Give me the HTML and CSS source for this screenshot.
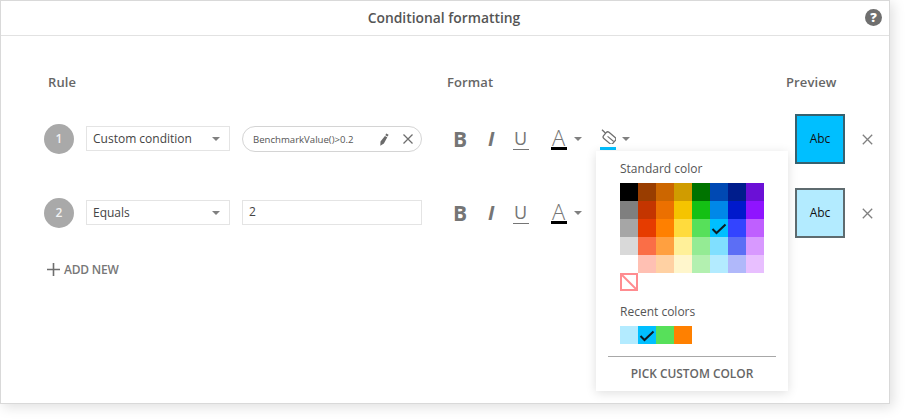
FILE: index.html
```html
<!DOCTYPE html>
<html lang="en">
<head>
<meta charset="utf-8">
<title>Conditional formatting</title>
<link rel="stylesheet" href="styles.css">
</head>
<body>
<div class="dialog">
  <header class="title-bar">
    <h1 class="title">Conditional formatting</h1>
    <span class="help">?</span>
  </header>
  <main class="body">
    <div class="heads">
      <span class="head head-rule">Rule</span>
      <span class="head head-format">Format</span>
      <span class="head">Preview</span>
    </div>

    <div class="rule">
      <span class="num">1</span>
      <div class="select"><span>Custom condition</span><i class="caret"></i></div>
      <div class="formula">
        <span class="formula-text">BenchmarkValue()&gt;0.2</span>
        <svg class="pencil" width="10" height="13" viewBox="0 0 10 13"><path d="M7.2 0.4l2.4 1.3-0.9 1.8-2.4-1.3zM5.9 3l2.4 1.3-3.4 6.2-3.6 2.2 0.2-4.1z" fill="#6a6a6a"/></svg>
        <svg class="x-small" width="10" height="10" viewBox="0 0 10 10"><path d="M0.5 0.5l9 9M9.5 0.5l-9 9" stroke="#6e6e6e" stroke-width="1.3" fill="none"/></svg>
      </div>
      <div class="format">
        <span class="fmt-b">B</span>
        <span class="fmt-i">I</span>
        <span class="fmt-u">U</span>
        <span class="fmt-a">A<i class="bar bar-black"></i></span>
        <i class="caret fmt-caret"></i>
        <span class="fmt-fill">
          <svg width="16" height="15" viewBox="0 0 16 15"><g transform="rotate(40 9.5 9)"><rect x="3.5" y="5" width="12" height="8" rx="2" fill="none" stroke="#6e6e6e" stroke-width="1.3"/><path d="M7 9h8" fill="none" stroke="#6e6e6e" stroke-width="1.1"/></g><path d="M2 0.8l3.6 3.4" fill="none" stroke="#6e6e6e" stroke-width="1.3"/></svg>
          <i class="bar bar-blue"></i>
        </span>
        <i class="caret fmt-caret2"></i>
      </div>
      <div class="preview preview-blue">Abc</div>
      <svg class="x-row" width="11" height="11" viewBox="0 0 11 11"><path d="M0.8 0.8l9.4 9.4M10.2 0.8l-9.4 9.4" stroke="#808080" stroke-width="1.3" fill="none"/></svg>
    </div>

    <div class="rule">
      <span class="num">2</span>
      <div class="select"><span>Equals</span><i class="caret"></i></div>
      <div class="value">2</div>
      <div class="format">
        <span class="fmt-b">B</span>
        <span class="fmt-i">I</span>
        <span class="fmt-u">U</span>
        <span class="fmt-a">A<i class="bar bar-black"></i></span>
        <i class="caret fmt-caret"></i>
      </div>
      <div class="preview preview-light">Abc</div>
      <svg class="x-row" width="11" height="11" viewBox="0 0 11 11"><path d="M0.8 0.8l9.4 9.4M10.2 0.8l-9.4 9.4" stroke="#808080" stroke-width="1.3" fill="none"/></svg>
    </div>

    <div class="add-new">
      <svg width="13" height="13" viewBox="0 0 13 13"><path d="M6.5 0v13M0 6.5h13" stroke="#6e6e6e" stroke-width="1.6" fill="none"/></svg>
      <span>ADD NEW</span>
    </div>
  </main>

  <aside class="popup">
    <div class="popup-label">Standard color</div>
    <div class="palette">
      <i class="c000000"></i><i class="c993d00"></i><i class="ccc6600"></i><i class="cd09c00"></i><i class="c007300"></i><i class="c0049b3"></i><i class="c001d8c"></i><i class="c6b10d6"></i>
      <i class="c7f7f7f"></i><i class="cc43500"></i><i class="cec7000"></i><i class="cf5c400"></i><i class="c14c014"></i><i class="c0088e8"></i><i class="c0019cc"></i><i class="c8f14ff"></i>
      <i class="ca6a6a6"></i><i class="ce63c00"></i><i class="cff8000"></i><i class="cffdb3d"></i><i class="c57e05a"></i>
      <i class="c00bfff"><svg class="check" width="16" height="12" viewBox="0 0 16 12"><path d="M1.5 6l4 4 9-8.5" fill="none" stroke="#0c1a22" stroke-width="2"/></svg></i>
      <i class="c3344ff"></i><i class="cbf5fff"></i>
      <i class="cd9d9d9"></i><i class="cfa6e47"></i><i class="cffa040"></i><i class="cfff099"></i><i class="c94eb94"></i><i class="c80dfff"></i><i class="c5c6ef5"></i><i class="cd899ff"></i>
      <i class="cffffff"></i><i class="cffc0b3"></i><i class="cffd1a3"></i><i class="cfff6cc"></i><i class="cb3f0b0"></i><i class="cb3ebff"></i><i class="cb0b8fa"></i><i class="ce8bfff"></i>
      <i class="none"><svg width="18" height="18" viewBox="0 0 18 18"><rect x="1" y="1" width="16" height="16" fill="#fff" stroke="#ff8c90" stroke-width="2"/><path d="M1 1l16 16" stroke="#ff8c90" stroke-width="2"/></svg></i>
    </div>
    <div class="popup-label recent-label">Recent colors</div>
    <div class="palette">
      <i class="cb3ebff"></i>
      <i class="c00bfff"><svg class="check" width="16" height="12" viewBox="0 0 16 12"><path d="M1.5 6l4 4 9-8.5" fill="none" stroke="#0c1a22" stroke-width="2"/></svg></i>
      <i class="c57e05a"></i><i class="cff8000"></i>
    </div>
    <div class="pick">PICK CUSTOM COLOR</div>
  </aside>
</div>
</body>
</html>
```
FILE: styles.css
```css
* { box-sizing: border-box; }
html, body { margin: 0; height: 100%; background: #fff; overflow: hidden; }
body { font-family: "Open Sans", sans-serif; color: #555; }

.dialog {
  position: relative;
  width: 890px;
  height: 404px;
  border: 1px solid #d9d9d9;
  background: #fff;
  box-shadow: 3px 3px 12px rgba(0,0,0,.13);
}

.title-bar {
  position: relative;
  height: 35px;
  border-bottom: 1px solid #e2e2e2;
  display: flex;
  align-items: center;
  justify-content: center;
}
.title { margin: 0 2px 1px 0; font-size: 13.85px; font-weight: 600; color: #555; }
.help {
  position: absolute;
  right: 7px;
  top: 8px;
  width: 17px;
  height: 17px;
  border-radius: 50%;
  background: #6f6f6f;
  color: #fff;
  font-size: 13px;
  font-weight: 800;
  line-height: 17px;
  text-align: center;
}

.body { padding: 37px 0 0 43px; }
.heads { display: flex; height: 18px; align-items: center; margin-bottom: 23px; }
.head { font-size: 13px; font-weight: 600; color: #666; letter-spacing: .1px; }
.head-rule { width: 403px; padding-left: 4px; }
.head-format { width: 339px; }

.rule { display: flex; align-items: center; height: 50px; margin-bottom: 24px; }
.num {
  width: 30px;
  height: 30px;
  border-radius: 50%;
  background: #a9a9a9;
  color: #f2f2f2;
  font-size: 12px;
  font-weight: 600;
  line-height: 30px;
  text-align: center;
  flex: none;
  margin-right: 12px;
}
.select {
  width: 144px;
  height: 25px;
  margin: 0 12px 1px 0;
  border: 1px solid #e4e4e4;
  display: flex;
  align-items: center;
  justify-content: space-between;
  padding: 0 9px 0 6px;
  font-size: 12px;
  color: #444;
  flex: none;
}
.caret {
  display: block;
  width: 0;
  height: 0;
  border-style: solid;
  border-width: 4px 4px 0;
  border-color: #808080 transparent transparent;
  flex: none;
}
.formula {
  width: 180px;
  height: 26px;
  border: 1px solid #d4d4d4;
  border-radius: 13px;
  display: flex;
  align-items: center;
  padding: 0 8px 0 10px;
  flex: none;
}
.formula-text { font-size: 9.6px; color: #555; width: 127px; }
.pencil { margin-right: 14px; flex: none; }
.x-small { flex: none; }
.value {
  width: 180px;
  height: 25px;
  margin-bottom: 1px;
  border: 1px solid #e4e4e4;
  padding-left: 6px;
  font-size: 12px;
  line-height: 22px;
  color: #444;
  flex: none;
}

.format { width: 373px; height: 30px; display: flex; align-items: center; padding-left: 31px; flex: none; position: relative; color: #757575; }
.fmt-b { font-size: 21px; font-weight: 700; width: 35px; line-height: 30px; }
.fmt-i { font-size: 20px; font-weight: 700; font-style: italic; width: 25px; line-height: 30px; }
.fmt-u { font-size: 18px; width: 38px; line-height: 22px; height: 23px; padding: 0 1px; position: relative; margin-top: -1px; }
.fmt-u::after { content: ""; position: absolute; left: 0; bottom: 0; width: 16px; height: 1px; background: #757575; }
.fmt-a { position: relative; width: 23px; height: 30px; font-size: 22px; line-height: 27px; font-weight: 300; padding-left: 1px; }
.bar { position: absolute; left: 0; bottom: 4px; width: 16px; height: 3px; }
.bar-black { background: #000; }
.bar-blue { background: #00bfff; }
.fmt-caret { margin: 0 18px 0 0; }
.fmt-fill { position: relative; width: 22px; height: 30px; padding-top: 5px; }
.fmt-fill svg { display: block; }

.preview {
  width: 50px;
  height: 50px;
  border: 2px solid rgba(70,70,70,.78);
  color: #111;
  font-size: 12px;
  line-height: 46px;
  text-align: center;
  flex: none;
  margin-right: 17px;
}
.preview-blue { background: #00bfff; }
.preview-light { background: #b3ebff; }
.x-row { flex: none; }

.add-new { display: flex; align-items: center; gap: 4px; padding-left: 3px; margin-top: -1px; height: 16px; font-size: 12px; font-weight: 600; color: #777; letter-spacing: -.2px; }

.popup {
  position: absolute;
  left: 595px;
  top: 150px;
  width: 192px;
  height: 240px;
  background: #fff;
  box-shadow: 0 2px 10px rgba(0,0,0,.13);
  padding: 10px 12px 0;
}
.popup-label { padding-left: 12px; height: 18px; font-size: 12px; line-height: 16px; color: #555; }
.palette { margin-left: 12px; margin-top: 4px; display: grid; grid-template-columns: repeat(8, 18px); grid-auto-rows: 18px; }
.palette i { display: flex; align-items: center; justify-content: center; }
.recent-label { margin-top: 13px; }
.none svg { display: block; }
.check { margin-top: 2px; flex: none; }
.pick {
  margin-top: 12px;
  border-top: 1px solid #a8a8a8;
  padding-top: 8px;
  text-align: center;
  font-size: 11.9px;
  font-weight: 600;
  color: #666;
}

.c000000 { background: #000000; } .c993d00 { background: #993d00; } .ccc6600 { background: #cc6600; } .cd09c00 { background: #d09c00; }
.c007300 { background: #007300; } .c0049b3 { background: #0049b3; } .c001d8c { background: #001d8c; } .c6b10d6 { background: #6b10d6; }
.c7f7f7f { background: #7f7f7f; } .cc43500 { background: #c43500; } .cec7000 { background: #ec7000; } .cf5c400 { background: #f5c400; }
.c14c014 { background: #14c014; } .c0088e8 { background: #0088e8; } .c0019cc { background: #0019cc; } .c8f14ff { background: #8f14ff; }
.ca6a6a6 { background: #a6a6a6; } .ce63c00 { background: #e63c00; } .cff8000 { background: #ff8000; } .cffdb3d { background: #ffdb3d; }
.c57e05a { background: #57e05a; } .c00bfff { background: #00bfff; } .c3344ff { background: #3344ff; } .cbf5fff { background: #bf5fff; }
.cd9d9d9 { background: #d9d9d9; } .cfa6e47 { background: #fa6e47; } .cffa040 { background: #ffa040; } .cfff099 { background: #fff099; }
.c94eb94 { background: #94eb94; } .c80dfff { background: #80dfff; } .c5c6ef5 { background: #5c6ef5; } .cd899ff { background: #d899ff; }
.cffffff { background: #ffffff; } .cffc0b3 { background: #ffc0b3; } .cffd1a3 { background: #ffd1a3; } .cfff6cc { background: #fff6cc; }
.cb3f0b0 { background: #b3f0b0; } .cb3ebff { background: #b3ebff; } .cb0b8fa { background: #b0b8fa; } .ce8bfff { background: #e8bfff; }
```
